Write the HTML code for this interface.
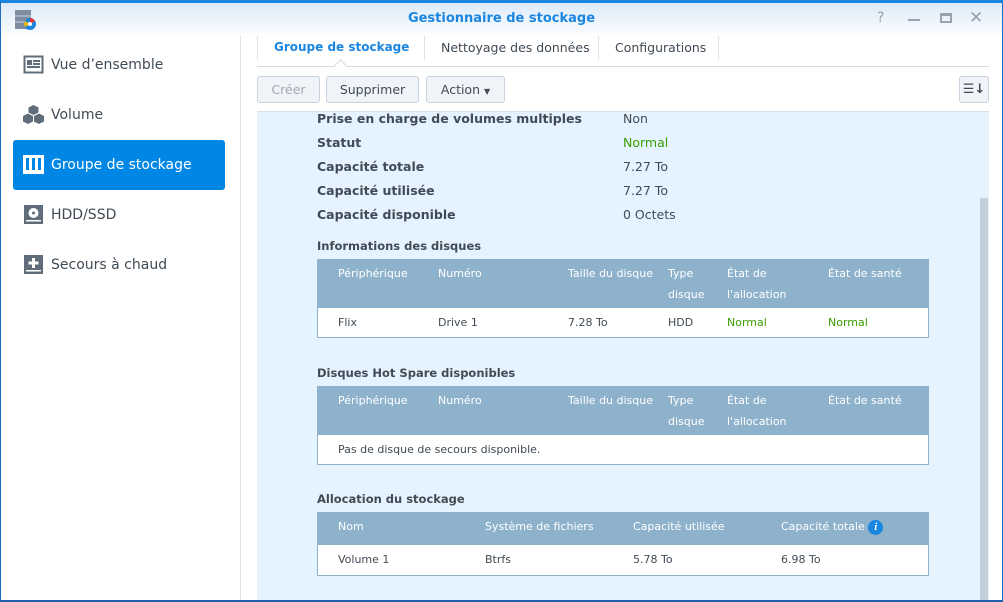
<!DOCTYPE html>
<html><head><meta charset="utf-8">
<style>
*{box-sizing:border-box;margin:0;padding:0}
body{width:1003px;height:602px;overflow:hidden;font-family:"DejaVu Sans","Liberation Sans",sans-serif;background:#fff;position:relative;color:#414b55}
.abs{position:absolute}
#frame{position:absolute;left:0;top:0;width:1003px;height:602px;border:1px solid #1f6fc0;border-top:3px solid #1a86e0;border-bottom:2px solid #1d5fa8}
#title{left:1px;top:3px;width:1001px;height:30px;background:linear-gradient(#dcebf9,#f8fbfe)}
#title .t{position:absolute;left:0;width:100%;text-align:center;top:8px;font-size:13px;font-weight:bold;color:#1a86e0}
.nav{position:absolute;left:13px;width:212px;height:50px;border-radius:3px}
.nav span{position:absolute;left:38px;top:17px;font-size:14px}
.nav .ic{position:absolute;left:10px;top:15px;width:21px;height:19px}
.sel{background:#0086e5;color:#fff}
.tab{position:absolute;top:40px;font-size:12.5px;color:#414b55}
.btn{position:absolute;top:76px;height:27px;border:1px solid #c7d2dc;border-radius:3px;background:#f0f4f8;font-size:12.5px;text-align:center;line-height:25px;color:#414b55}
.lbl{position:absolute;left:317px;font-size:12.5px;font-weight:bold;color:#414b55}
.val{position:absolute;left:623px;font-size:12.5px;color:#414b55}
.sec{position:absolute;left:317px;font-size:11.5px;font-weight:bold;color:#414b55}
.tbl{position:absolute;left:317px;width:612px;border:1px solid #8fb2cc;background:#fff}
.th{background:#8fb2cc;position:relative}
.th div,.tr div{position:absolute;font-size:11px}
.th div{color:#fff;line-height:21px;top:3px}
.tr{position:relative}
.tr div{color:#414b55;top:8px}
.g{color:#3a9e00!important}
</style></head><body>
<div id="frame"></div>
<div id="title" class="abs"><div class="t">Gestionnaire de stockage</div>
<svg class="abs" style="left:13px;top:6px" width="24" height="22" viewBox="0 0 24 22"><rect x="1" y="1" width="16" height="19" fill="#7d8ea3"/><path d="M1 7h16M1 13h16" stroke="#c5d0dc"/><circle cx="16" cy="15" r="6" fill="#1a86e0"/><path d="M16 15V9a6 6 0 0 1 5 3z" fill="#e33"/><path d="M16 15l-5 3a6 6 0 0 1 0-6z" fill="#f7b500"/><circle cx="16" cy="15" r="2" fill="#fff"/></svg>
<div class="abs" style="left:876px;top:7px;font-size:14px;color:#9aa3ad">?</div>
<div class="abs" style="left:907px;top:16px;width:12px;height:2px;background:#9aa3ad"></div>
<div class="abs" style="left:939px;top:10px;width:12px;height:10px;border:2px solid #9aa3ad;border-top-width:3px"></div>
<div class="abs" style="left:968px;top:5px;font-size:17px;color:#9aa3ad">✕</div>
</div>
<div class="abs" style="left:240px;top:36px;width:1px;height:564px;background:#e0e4e8"></div>
<div class="nav" style="top:40px"><svg class="ic" viewBox="0 0 21 19"><rect x="0.5" y="0.5" width="20" height="18" fill="#5f6c7a"/><rect x="2.5" y="2.5" width="16" height="14" fill="#fff"/><rect x="4" y="5" width="5" height="5" fill="#5f6c7a"/><rect x="4" y="11" width="13" height="2" fill="#5f6c7a"/><rect x="10" y="5" width="7" height="2" fill="#5f6c7a"/><rect x="10" y="8" width="7" height="2" fill="#5f6c7a"/></svg><span>Vue d’ensemble</span></div>
<div class="nav" style="top:90px"><svg class="ic" viewBox="0 0 21 19"><path d="M10.5 0l5 2.5v5l-5 2.5-5-2.5v-5z M5 8.5l5 2.5v5.5l-5 2.5-5-2.5v-5.5z M16 8.5l5 2.5v5.5l-5 2.5-5-2.5v-5.5z" fill="#5f6c7a"/></svg><span>Volume</span></div>
<div class="nav sel" style="top:140px"><svg class="ic" viewBox="0 0 21 19"><rect x="0" y="0" width="21" height="19" fill="#fff"/><rect x="3" y="3" width="3" height="12" fill="#0086e5"/><rect x="9" y="3" width="3" height="12" fill="#0086e5"/><rect x="15" y="3" width="3" height="12" fill="#0086e5"/></svg><span>Groupe de stockage</span></div>
<div class="nav" style="top:190px"><svg class="ic" viewBox="0 0 21 19"><rect x="1" y="0" width="19" height="19" fill="#5f6c7a"/><circle cx="10.5" cy="8" r="5" fill="#fff"/><circle cx="10.5" cy="8" r="1.5" fill="#5f6c7a"/><rect x="3" y="15" width="15" height="1.5" fill="#fff"/></svg><span>HDD/SSD</span></div>
<div class="nav" style="top:240px"><svg class="ic" viewBox="0 0 21 19"><rect x="1" y="0" width="19" height="19" fill="#5f6c7a"/><rect x="9" y="3" width="3" height="10" fill="#fff"/><rect x="5.5" y="6.5" width="10" height="3" fill="#fff"/><rect x="3" y="15" width="15" height="1.5" fill="#fff"/></svg><span>Secours à chaud</span></div>
<div class="abs" style="left:257px;top:36px;width:1px;height:24px;background:#dde3e8"></div>
<div class="tab" style="left:274px;color:#1a86e0;font-weight:bold;font-size:12px">Groupe de stockage</div>
<div class="abs" style="left:424px;top:36px;width:1px;height:24px;background:#dde3e8"></div>
<div class="tab" style="left:441px">Nettoyage des données</div>
<div class="abs" style="left:598px;top:36px;width:1px;height:24px;background:#dde3e8"></div>
<div class="tab" style="left:615px">Configurations</div>
<div class="abs" style="left:718px;top:36px;width:1px;height:24px;background:#dde3e8"></div>
<div class="abs" style="left:257px;top:66px;width:732px;height:1px;background:#d6dbe0"></div>
<div class="abs" style="left:336px;top:61px;width:9px;height:9px;background:#fff;border-left:1px solid #d6dbe0;border-top:1px solid #d6dbe0;transform:rotate(45deg)"></div>
<div class="btn" style="left:257px;width:63px;color:#a0a8b0">Créer</div>
<div class="btn" style="left:326px;width:93px">Supprimer</div>
<div class="btn" style="left:426px;width:79px">Action <span style="font-size:8px">▼</span></div>
<div class="btn" style="left:959px;width:30px;font-weight:bold;font-size:13px">☰↓</div>
<div class="abs" style="left:257px;top:111px;width:732px;height:489px;background:#e4f3fd;border-top:1px solid #d6e2ec"></div>
<div class="abs" style="left:980px;top:198px;width:8px;height:402px;background:#c1cfd9"></div>
<div class="lbl" style="top:111px">Prise en charge de volumes multiples</div><div class="val" style="top:111px">Non</div>
<div class="lbl" style="top:135px">Statut</div><div class="val g" style="top:135px">Normal</div>
<div class="lbl" style="top:159px">Capacité totale</div><div class="val" style="top:159px">7.27 To</div>
<div class="lbl" style="top:183px">Capacité utilisée</div><div class="val" style="top:183px">7.27 To</div>
<div class="lbl" style="top:207px">Capacité disponible</div><div class="val" style="top:207px">0 Octets</div>

<div class="sec" style="top:239px">Informations des disques</div>
<div class="tbl" style="top:259px">
<div class="th" style="height:48px"><div style="left:20px">Périphérique</div><div style="left:120px">Numéro</div><div style="left:250px">Taille du disque</div><div style="left:350px">Type<br>disque</div><div style="left:409px">État de<br>l'allocation</div><div style="left:510px">État de santé</div></div>
<div class="tr" style="height:29px"><div style="left:20px">Flix</div><div style="left:120px">Drive 1</div><div style="left:250px">7.28 To</div><div style="left:350px">HDD</div><div class="g" style="left:409px">Normal</div><div class="g" style="left:510px">Normal</div></div>
</div>

<div class="sec" style="top:366px">Disques Hot Spare disponibles</div>
<div class="tbl" style="top:386px">
<div class="th" style="height:48px"><div style="left:20px">Périphérique</div><div style="left:120px">Numéro</div><div style="left:250px">Taille du disque</div><div style="left:350px">Type<br>disque</div><div style="left:409px">État de<br>l'allocation</div><div style="left:510px">État de santé</div></div>
<div class="tr" style="height:29px"><div style="left:20px">Pas de disque de secours disponible.</div></div>
</div>

<div class="sec" style="top:492px">Allocation du stockage</div>
<div class="tbl" style="top:512px">
<div class="th" style="height:32px"><div style="left:20px">Nom</div><div style="left:167px">Système de fichiers</div><div style="left:315px">Capacité utilisée</div><div style="left:463px">Capacité totale <span style="display:inline-block;width:15px;height:15px;border-radius:50%;background:#1a86e0;color:#fff;font-size:11px;line-height:15px;text-align:center;font-style:italic;font-weight:bold;font-family:'Liberation Serif',serif">i</span></div></div>
<div class="tr" style="height:30px"><div style="left:20px">Volume 1</div><div style="left:167px">Btrfs</div><div style="left:315px">5.78 To</div><div style="left:463px">6.98 To</div></div>
</div>
</body></html>
